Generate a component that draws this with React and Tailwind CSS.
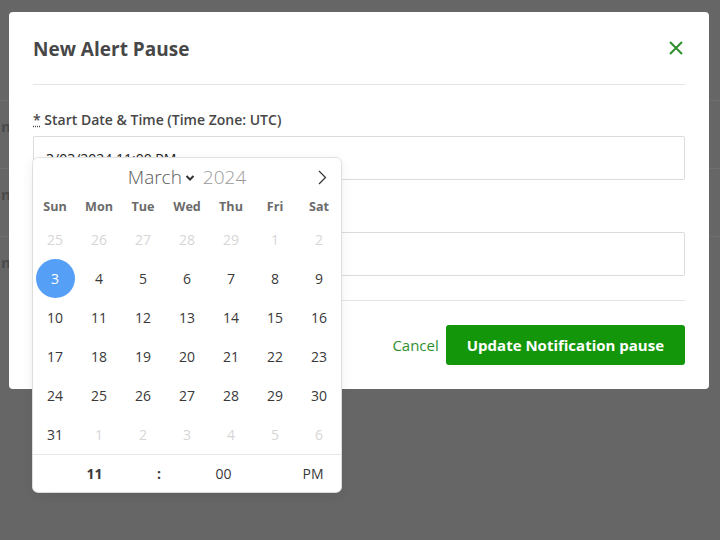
import React from "react";

const font = { fontFamily: '"Open Sans", "Noto Sans", sans-serif' };

const weekdays = ["Sun", "Mon", "Tue", "Wed", "Thu", "Fri", "Sat"];

// March 2024 grid, with the trailing/leading days of the other months
const weeks = [
  [25, 26, 27, 28, 29, 1, 2],
  [3, 4, 5, 6, 7, 8, 9],
  [10, 11, 12, 13, 14, 15, 16],
  [17, 18, 19, 20, 21, 22, 23],
  [24, 25, 26, 27, 28, 29, 30],
  [31, 1, 2, 3, 4, 5, 6],
];

const CloseIcon = () => (
  <svg width="14" height="14" viewBox="0 0 14 14" fill="none">
    <path d="M1 1L13 13M13 1L1 13" stroke="#2f8f2f" strokeWidth="2" />
  </svg>
);

const Calendar = () => (
  <div
    className="absolute left-[33px] top-[158px] w-[308px] rounded-[5px] bg-white shadow-[0_3px_13px_rgba(0,0,0,0.08),1px_0_0_#e6e6e6,-1px_0_0_#e6e6e6,0_1px_0_#e6e6e6,0_-1px_0_#e6e6e6]"
    style={font}
  >
    {/* month header */}
    <div className="relative flex h-[36px] items-start justify-center pt-[5px]">
      <div className="flex items-center gap-[8px] text-[19px] font-light leading-[28px]">
        <span className="flex items-center gap-[3px] text-[#5a5a5a]">
          March
          <svg width="10" height="8" viewBox="0 0 10 8" className="mt-[1px]">
            <path d="M1.5 2L5 5.5L8.5 2" stroke="#333" strokeWidth="2" fill="none" />
          </svg>
        </span>
        <span className="text-[#9a9a9a]">2024</span>
      </div>
      <svg
        width="9"
        height="15"
        viewBox="0 0 9 15"
        className="absolute right-[14px] top-[12px]"
      >
        <path d="M1 1L7.5 7.5L1 14" stroke="#333" strokeWidth="1.2" fill="none" />
      </svg>
    </div>

    {/* weekdays */}
    <div className="grid h-[26px] grid-cols-7 items-center">
      {weekdays.map((d) => (
        <div key={d} className="text-center text-[12.6px] font-bold leading-[16px] text-[#6b6b6b]">
          {d}
        </div>
      ))}
    </div>

    {/* days */}
    <div>
      {weeks.map((week, wi) => (
        <div key={wi} className="grid h-[39px] grid-cols-7">
          {week.map((day, di) => {
            const outside = (wi === 0 && day > 20) || (wi === 0 && di >= 5) || (wi === 5 && di > 0);
            const selected = wi === 1 && di === 0;
            return (
              <div key={di} className="flex items-center justify-center">
                <span
                  className={
                    selected
                      ? "flex h-[39px] w-[39px] items-center justify-center rounded-full bg-[#569ff7] text-[14px] text-white"
                      : outside
                      ? "text-[14px] text-[#d6d6d6]"
                      : "text-[14px] text-[#393939]"
                  }
                >
                  {day}
                </span>
              </div>
            );
          })}
        </div>
      ))}
    </div>

    {/* time */}
    <div className="flex h-[38px] items-center border-t border-[#e6e6e6] text-[14px] text-[#393939]">
      <div className="w-[123px] text-center font-bold">11</div>
      <div className="w-[6px] text-center font-bold">:</div>
      <div className="w-[123px] text-center">00</div>
      <div className="flex-1 text-center">PM</div>
    </div>
  </div>
);

export default function App() {
  return (
    <div className="relative h-[540px] w-[720px] overflow-hidden bg-[#666666]" style={font}>
      {/* page behind the overlay, only the edge shows */}
      <div className="flex flex-col pt-[100px]">
        {[0, 1, 2].map((i) => (
          <div
            key={i}
            className="flex h-[68px] items-start border-t border-[#6f6f6f] pt-[14px]"
          >
            <span className="ml-[1px] text-[15px] font-bold text-[#4a4a4a]">n</span>
          </div>
        ))}
      </div>

      {/* modal */}
      <div className="absolute left-[9px] top-[12px] w-[700px] rounded-[4px] bg-white px-[24px]">
        <div className="flex h-[73px] items-center justify-between border-b border-[#e5e5e5] pt-[2px]">
          <h2 className="text-[19px] font-bold text-[#474747]">New Alert Pause</h2>
          <button className="mr-[2px] mt-[-3px]">
            <CloseIcon />
          </button>
        </div>

        <div className="border-b border-[#e5e5e5] pb-[24px] pt-[25px]">
          <label className="block text-[14px] font-semibold leading-[20px] text-[#474747]">
            <abbr title="required" className="[text-decoration:underline_dotted]">
              *
            </abbr>{" "}
            Start Date &amp; Time (Time Zone: UTC)
          </label>
          <div className="mt-[6px] flex h-[44px] items-center rounded-[2px] border border-[#dcdcdc] px-[12px] text-[14px] text-[#222]">
            3/03/2024 11:00 PM
          </div>

          {/* second field, its label and value lie under the open calendar */}
          <div className="mt-[26px] h-[20px]" />
          <div className="mt-[6px] h-[44px] rounded-[2px] border border-[#dcdcdc]" />
        </div>

        <div className="flex items-center justify-end gap-[7px] pb-[24px] pt-[24px]">
          <button className="text-[15px] text-[#2f8f2f]">Cancel</button>
          <button className="h-[40px] rounded-[3px] bg-[#14960a] px-[21px] text-[15px] font-bold text-white">
            Update Notification pause
          </button>
        </div>
      </div>

      <Calendar />
    </div>
  );
}
